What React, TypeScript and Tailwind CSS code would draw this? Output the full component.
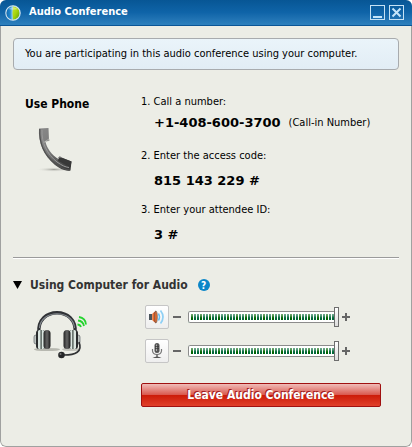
import { useState } from "react";

const steps = [
    { label: "Call a number:", value: "+1-408-600-3700", note: "(Call-in Number)" },
    { label: "Enter the access code:", value: "815 143 229 #" },
    { label: "Enter your attendee ID:", value: "3 #" },
];

function Logo() {
    return (
        <svg width="16" height="16" viewBox="0 0 16 16" aria-hidden="true">
            <defs>
                <linearGradient id="ballBlue" x1="0" y1="0" x2="1" y2="0">
                    <stop offset="0" stopColor="#0f66a8" />
                    <stop offset="0.3" stopColor="#1f86d0" />
                    <stop offset="0.5" stopColor="#a5ddf5" />
                </linearGradient>
                <linearGradient id="ballGreen" x1="0" y1="0" x2="1" y2="1">
                    <stop offset="0" stopColor="#c9e53a" />
                    <stop offset="0.5" stopColor="#a4d20c" />
                    <stop offset="1" stopColor="#4d9a10" />
                </linearGradient>
            </defs>
            <circle cx="8" cy="8" r="7.2" fill="url(#ballBlue)" />
            <path d="M8 1.2 A6.8 6.8 0 0 1 8 14.8 Q7 8 8 1.2Z" fill="url(#ballGreen)" />
            <path d="M3 4 Q8 0.5 13 4 Q8 5.5 3 4Z" fill="#fff" opacity="0.35" />
            <circle cx="8" cy="8" r="7.2" fill="none" stroke="#d3e4ee" strokeWidth="1.1" />
        </svg>
    );
}

function PhoneIcon() {
    return (
        <svg width="40" height="46" viewBox="0 0 40 46" aria-hidden="true">
            <defs>
                <linearGradient id="phoneBody" x1="0" y1="0" x2="0.8" y2="1">
                    <stop offset="0" stopColor="#8a8a8a" />
                    <stop offset="0.5" stopColor="#777" />
                    <stop offset="1" stopColor="#3a3a3a" />
                </linearGradient>
                <radialGradient id="phoneShade">
                    <stop offset="0" stopColor="#8d8d88" stopOpacity="0.8" />
                    <stop offset="1" stopColor="#ecede6" stopOpacity="0" />
                </radialGradient>
            </defs>
            <ellipse cx="19" cy="43.5" rx="18" ry="2.4" fill="url(#phoneShade)" />
            <path
                d="M4 2.5 L13.5 2 L14 14 L10.5 15.5 C11.5 22 17 29 23 33 L25.5 31 L36.5 35.5 L35.5 44.5 C31 45.5 25 43 20 39 C8 29 3 16 4 2.5Z"
                fill="url(#phoneBody)"
            />
            <path d="M4.8 3 C4 17 9 29 20.5 38 C26 42 31 44 35 44" fill="none" stroke="#505050" strokeWidth="1.2" />
            <path d="M7 4 C6.5 17 12 28 22 36 C27 39.5 30 41 34 41.5" fill="none" stroke="#999" strokeWidth="1" />
            <path d="M9.5 16 L14.5 14.5 L14 13Z" fill="#555" stroke="#d5d5d0" strokeWidth="0.6" />
            <path d="M24.5 31 L36.5 35.5 L35.5 41 L23 35Z" fill="#383838" />
            <path d="M22 33.5 L24.5 30.5 L26.5 31.5" fill="none" stroke="#8f8f8f" strokeWidth="1" />
        </svg>
    );
}

function HeadsetIcon() {
    return (
        <svg width="56" height="52" viewBox="0 0 56 52" aria-hidden="true">
            <defs>
                <linearGradient id="earPad" x1="0" y1="0" x2="1" y2="0">
                    <stop offset="0" stopColor="#222" />
                    <stop offset="0.5" stopColor="#666" />
                    <stop offset="1" stopColor="#181818" />
                </linearGradient>
            </defs>
            <ellipse cx="14" cy="42.5" rx="13" ry="1.6" fill="#77786f" opacity="0.45" />
            <ellipse cx="38" cy="42.5" rx="9" ry="1.6" fill="#77786f" opacity="0.35" />
            <path d="M6 26 C3 -1 45 -1 42 26" fill="none" stroke="#303236" strokeWidth="3.4" />
            <path d="M6.5 21 C8 2 40 2 41.5 21" fill="none" stroke="#858b90" strokeWidth="1.1" />
            <rect x="1" y="28" width="4" height="9" rx="2" fill="#bfc5c3" stroke="#62676a" strokeWidth="0.7" />
            <rect x="43" y="28" width="4" height="9" rx="2" fill="#bfc5c3" stroke="#62676a" strokeWidth="0.7" />
            <rect x="3" y="23" width="9" height="19" rx="3" fill="#2a2c2e" />
            <rect x="5" y="23" width="6" height="19" rx="1.5" fill="#dbe6e1" />
            <rect x="7.5" y="23" width="1.2" height="19" fill="#3c4642" />
            <rect x="10.5" y="23" width="7" height="19" rx="3.5" fill="url(#earPad)" />
            <rect x="36" y="23" width="9" height="19" rx="3" fill="#2a2c2e" />
            <rect x="37" y="23" width="6" height="19" rx="1.5" fill="#dbe6e1" />
            <rect x="39.3" y="23" width="1.2" height="19" fill="#3c4642" />
            <rect x="30.5" y="23" width="7" height="19" rx="3.5" fill="url(#earPad)" />
            <path d="M46 35 C50 45 42 48 31 48" fill="none" stroke="#303234" strokeWidth="1.7" />
            <circle cx="28.5" cy="48" r="3.3" fill="#252628" />
            <circle cx="27.5" cy="47" r="1" fill="#777" />
            <g fill="none" stroke="#25d430" strokeWidth="1.8">
                <path d="M44.5 17.5 Q47 17.5 48 20" />
                <path d="M45 13.5 Q50 14 51 19" />
                <path d="M46 10 Q52.5 11 53 17.5" />
            </g>
        </svg>
    );
}

function SpeakerIcon() {
    return (
        <svg width="18" height="18" viewBox="0 0 18 18" aria-hidden="true">
            <defs>
                <linearGradient id="cone" x1="0" y1="0" x2="1" y2="0">
                    <stop offset="0" stopColor="#f0a070" />
                    <stop offset="0.5" stopColor="#e2581c" />
                    <stop offset="1" stopColor="#8c2a08" />
                </linearGradient>
            </defs>
            <rect x="1" y="6" width="3" height="6" fill="#4b555c" />
            <path d="M4 6 L8 2.5 V15.5 L4 12Z" fill="url(#cone)" />
            <ellipse cx="8" cy="9" rx="1.4" ry="6" fill="#e2692c" stroke="#5c646a" strokeWidth="0.6" />
            <path d="M10.5 5.5 Q12.5 9 10.5 12.5" fill="none" stroke="#63bdf2" strokeWidth="1.5" />
            <path d="M12.5 2.5 Q17.5 9 12.5 15.5" fill="none" stroke="#8fd0f5" strokeWidth="1.7" />
        </svg>
    );
}

function MicIcon() {
    return (
        <svg width="18" height="18" viewBox="0 0 18 18" aria-hidden="true">
            <rect x="6.5" y="1" width="5" height="10" rx="2.5" fill="#555" />
            <path d="M8.5 2.5 V9" stroke="#aaa" strokeWidth="1" />
            <path d="M7 4.5 H11 M7 6.5 H11" stroke="#333" strokeWidth="0.7" />
            <path d="M4.5 7 V9 Q5 12.5 9 12.5 Q13 12.5 13.5 9 V7" fill="none" stroke="#777" strokeWidth="1.2" />
            <path d="M9 12.5 V15" stroke="#666" strokeWidth="1.5" />
            <path d="M4.5 16 Q9 13 13.5 16Z" fill="#555" />
        </svg>
    );
}

type VolumeProps = { name: string; icon: React.ReactNode };

function VolumeRow({ name, icon }: VolumeProps) {
    const [level, setLevel] = useState(100);

    return (
        <div className="flex items-center">
            <button
                aria-label={"Mute " + name}
                className="flex h-6 w-6 items-center justify-center rounded-xs border border-[#c6c6c6] bg-linear-to-b from-white to-[#eeeeee]"
            >
                {icon}
            </button>
            <button aria-label={name + " down"} onClick={() => setLevel(Math.max(0, level - 10))} className="ml-1 flex h-4 w-2 items-center">
                <svg width="8" height="8" viewBox="0 0 8 8"><path d="M0 4H8" stroke="#666" strokeWidth="2" /></svg>
            </button>
            <input
                type="range"
                aria-label={name + " volume"}
                value={level}
                onChange={(e) => setLevel(Number(e.target.value))}
                className="ml-[7px] h-5 w-[151px] appearance-none bg-transparent [&::-webkit-slider-runnable-track]:h-3 [&::-webkit-slider-runnable-track]:rounded-xs [&::-webkit-slider-runnable-track]:shadow-[inset_0_0_0_1px_#8c8c8c,inset_0_0_0_3px_#ffffff] [&::-webkit-slider-runnable-track]:bg-[linear-gradient(to_bottom,#ffffff88_0,#ffffff66_4px,#ffffff00_7px),repeating-linear-gradient(to_right,#006838_0,#006838_2px,#ffffff_2px,#ffffff_3px,#006400_3px,#006400_5px,#ffffff_5px,#ffffff_6px,#006838_6px,#006838_8px,#ffffff_8px,#ffffff_9px)] [&::-webkit-slider-thumb]:-mt-1 [&::-webkit-slider-thumb]:h-5 [&::-webkit-slider-thumb]:w-[5px] [&::-webkit-slider-thumb]:appearance-none [&::-webkit-slider-thumb]:border [&::-webkit-slider-thumb]:border-[#6e6e6e] [&::-webkit-slider-thumb]:bg-linear-to-b [&::-webkit-slider-thumb]:from-white [&::-webkit-slider-thumb]:to-[#dddddd]"
            />
            <button aria-label={name + " up"} onClick={() => setLevel(Math.min(100, level + 10))} className="ml-[3px] flex h-4 w-2 items-center">
                <svg width="8" height="8" viewBox="0 0 8 8"><path d="M0 4H8M4 0V8" stroke="#666" strokeWidth="2" /></svg>
            </button>
        </div>
    );
}

export default function App() {
    const [open, setOpen] = useState(true);

    return (
        <div className="flex min-h-screen flex-col overflow-hidden rounded-md bg-[#ecede6] font-['DejaVu_Sans_Condensed','DejaVu_Sans',sans-serif] text-[11px] text-black">
            {/* title bar */}
            <header className="flex h-[26px] items-center border-b border-[#0a5596] bg-linear-to-b from-[#075695] via-[#0f64a8] to-[#2d80bd] pr-2 pl-[5px]">
                <Logo />
                <h1 className="ml-2 flex-1 font-bold text-white">Audio Conference</h1>
                <div className="flex gap-1">
                    <button aria-label="Minimize" className="h-[15px] w-[15px] border border-[#c5e2f5]">
                        <svg width="13" height="13" viewBox="0 0 13 13"><path d="M2 11H11" stroke="#c5e5fa" strokeWidth="2" /></svg>
                    </button>
                    <button aria-label="Close" className="h-[15px] w-[15px] border border-[#c5e2f5]">
                        <svg width="13" height="13" viewBox="0 0 13 13"><path d="M2.5 2.5L10.5 10.5M10.5 2.5L2.5 10.5" stroke="#c5e5fa" strokeWidth="2" /></svg>
                    </button>
                </div>
            </header>

            <main className="flex-1 rounded-b-md border border-t-0 border-[#a0a1a0] px-3 pt-3">
                <p className="rounded-sm border border-[#a8abae] bg-linear-to-b from-[#eaf4fa] to-[#e2edf5] px-[11px] py-[7px] leading-4">
                    You are participating in this audio conference using your computer.
                </p>

                {/* phone */}
                <section className="flex pt-6 pb-[13px]">
                    <div className="w-32 pl-3">
                        <h2 className="text-xs leading-5 font-bold">Use Phone</h2>
                        <div className="mt-3 pl-2.5"><PhoneIcon /></div>
                    </div>
                    <ol className="flex flex-1 flex-col gap-3">
                        {steps.map((step, i) => (
                            <li key={step.label}>
                                <p className="leading-4">{i + 1}. {step.label}</p>
                                <p className={step.note ? "flex h-[26px] items-center pl-[13px]" : "flex h-[26px] items-center pt-2 pl-[13px]"}>
                                    <strong className="font-['DejaVu_Sans',sans-serif] text-[13px]">{step.value}</strong>
                                    {step.note && <span className="ml-2">{step.note}</span>}
                                </p>
                            </li>
                        ))}
                    </ol>
                </section>

                <hr className="h-0.5 border-0 border-t border-[#9b9b9b] bg-white" />

                {/* computer audio */}
                <section className="pt-4">
                    <div className="flex items-center">
                        <button aria-label="Toggle computer audio" aria-expanded={open} onClick={() => setOpen(!open)}>
                            <svg width="9" height="8" viewBox="0 0 9 8"><path d="M0 0H9L4.5 8Z" /></svg>
                        </button>
                        <h2 className="ml-2 text-xs leading-5 font-bold text-[#333]">Using Computer for Audio</h2>
                        <button aria-label="Help" className="ml-2.5 flex h-3 w-3 items-center justify-center rounded-full bg-[#0b86c8] text-[10px] font-bold text-white">?</button>
                    </div>
                    {open && (
                        <div className="mt-2.5 flex">
                            <div className="w-32 pt-0.5 pl-5"><HeadsetIcon /></div>
                            <div className="flex flex-1 flex-col">
                                <div className="flex flex-col gap-2.5 pl-1">
                                    <VolumeRow name="Speaker" icon={<SpeakerIcon />} />
                                    <VolumeRow name="Microphone" icon={<MicIcon />} />
                                </div>
                                <button className="mt-5 mr-[18px] h-6 rounded-xs border border-[#a01010] bg-[linear-gradient(to_bottom,#f0bcb8,#d9564c_50%,#cc1a08_50%,#e0402a)] text-xs font-bold text-white text-shadow-[-1px_-1px_0_#a02020]">
                                    Leave Audio Conference
                                </button>
                            </div>
                        </div>
                    )}
                </section>
            </main>
        </div>
    );
}
